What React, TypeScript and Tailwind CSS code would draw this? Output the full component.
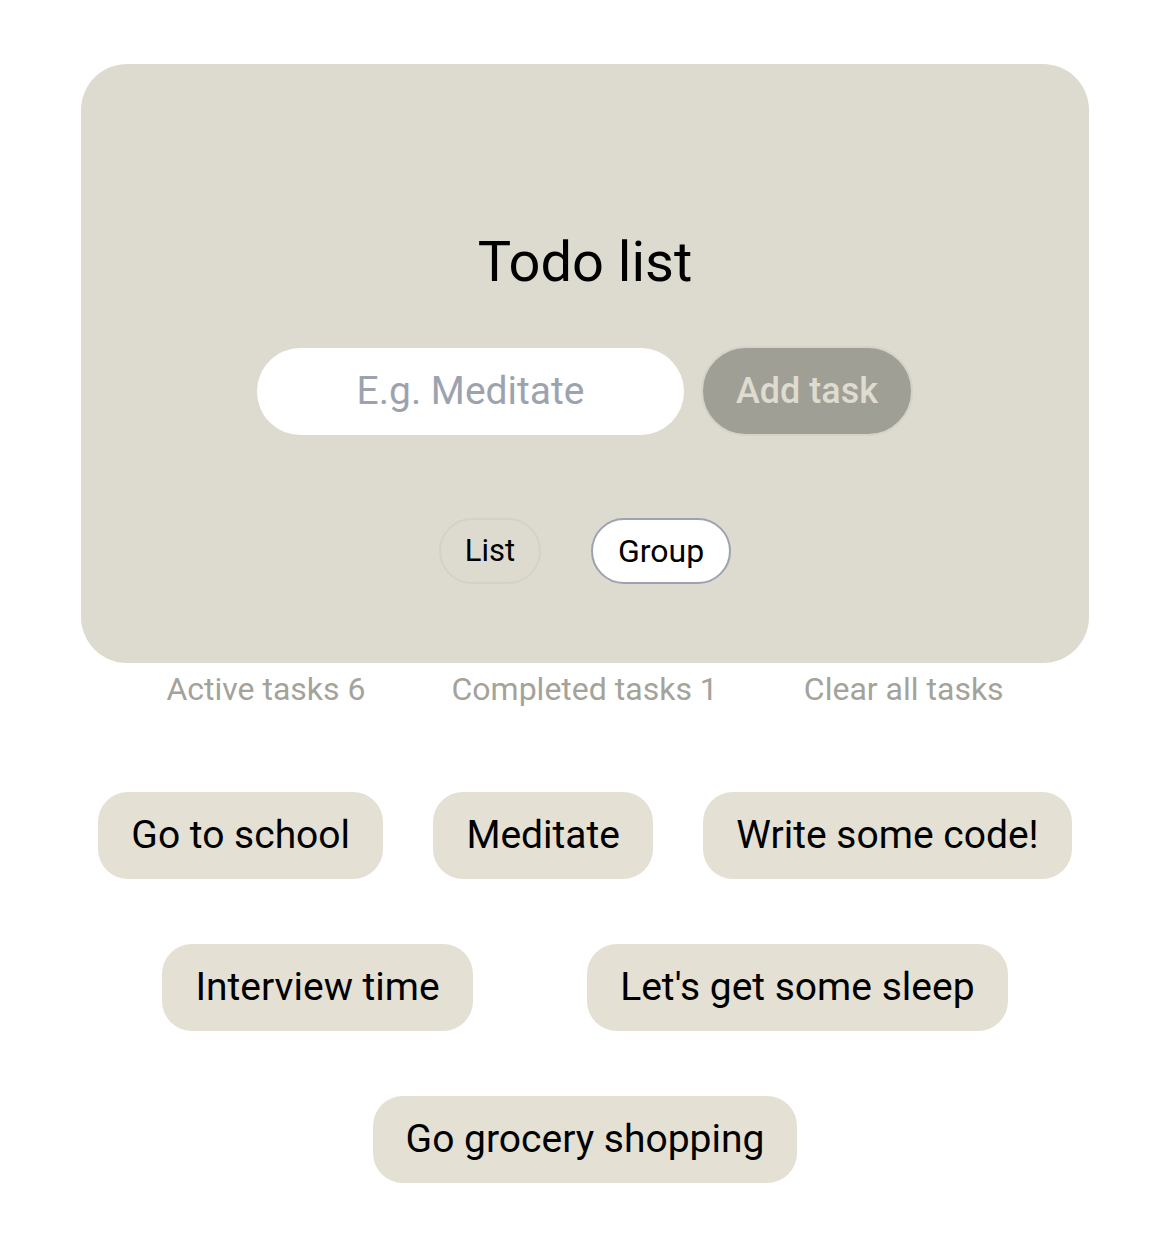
import { useState } from 'react'

const TASKS = [
  'Go to school',
  'Meditate',
  'Write some code!',
  'Interview time',
  "Let's get some sleep",
  'Go grocery shopping',
]

export default function App() {
  const [view, setView] = useState<'list' | 'group'>('group')
  const [text, setText] = useState('')

  return (
    <div className="min-h-screen bg-white font-['Roboto',sans-serif] text-black">
      <div className="ml-[48px] w-[1074px] pt-[64px] pb-[60px]">
        <div className="mx-auto flex h-[599px] w-[1008px] flex-col items-center rounded-[46px] bg-[#dddbcf] pt-[166px]">
          <h1 className="text-[56px] leading-[64px] font-normal">Todo list</h1>
          <div className="mt-[52px] flex items-center gap-[17px]">
            <input
              value={text}
              onChange={(e) => setText(e.target.value)}
              placeholder="E.g. Meditate"
              className="h-[87px] w-[427px] rounded-full bg-white text-center text-[39px] outline-none placeholder:text-[#9ca3af]"
            />
            <button className="h-[90px] w-[212px] rounded-full border-2 border-[#d3d2cb] bg-[#a09f96] text-[36px] font-medium text-[#dedbd0]">
              Add task
            </button>
          </div>
          <div className="mt-[82px] flex items-center gap-[50px]">
            <button
              onClick={() => setView('list')}
              className={
                view === 'list'
                  ? 'h-[66px] w-[102px] rounded-full border-2 border-[#9ca3af] bg-white text-[31px]'
                  : 'h-[66px] w-[102px] rounded-full border-2 border-[#d3d2ca] text-[31px]'
              }
            >
              List
            </button>
            <button
              onClick={() => setView('group')}
              className={
                view === 'group'
                  ? 'h-[66px] w-[140px] rounded-full border-2 border-[#9ca3af] bg-white text-[32px]'
                  : 'h-[66px] w-[140px] rounded-full border-2 border-[#d3d2ca] text-[32px]'
              }
            >
              Group
            </button>
          </div>
        </div>

        <div className="mt-[7px] flex justify-center gap-[86px] text-[32px] leading-[38px] text-[#a3a39a]">
          <span>Active tasks 6</span>
          <span>Completed tasks 1</span>
          <button className="text-[#a3a39a]">Clear all tasks</button>
        </div>

        <div className="mt-[84px] flex flex-wrap justify-evenly gap-y-[65px]">
          {TASKS.map((t) => (
            <div
              key={t}
              className="flex h-[87px] items-center rounded-[30px] bg-[#e4e0d3] px-[33px] text-[39px]"
            >
              {t}
            </div>
          ))}
        </div>
      </div>
    </div>
  )
}
